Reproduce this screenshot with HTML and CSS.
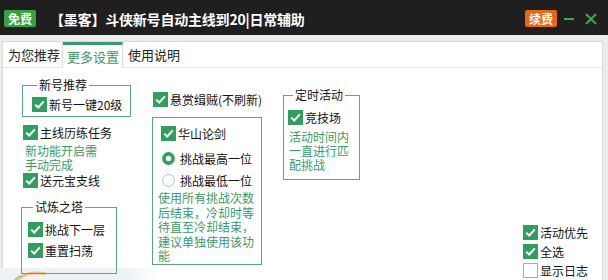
FILE: index.html
```html
<!DOCTYPE html>
<html lang="zh-CN">
<head>
<meta charset="utf-8">
<title>墨客 斗侠</title>
<link rel="stylesheet" href="styles.css">
</head>
<body>
<div class="titlebar">
  <span class="badge free">免费</span>
  <span class="title">【墨客】斗侠新号自动主线到20|日常辅助</span>
  <span class="spacer"></span>
  <span class="badge renew">续费</span>
  <span class="win-btn min"><svg width="10" height="10" viewBox="0 0 10 10"><rect x="0" y="4" width="10" height="2" fill="#3aa84f"/></svg></span>
  <span class="win-btn close"><svg width="12" height="12" viewBox="0 0 12 12"><path d="M1 1 L11 11 M11 1 L1 11" stroke="#3aa84f" stroke-width="2" fill="none"/></svg></span>
</div>
<div class="main">
  <div class="box">
    <div class="tabs">
      <div class="tab">为您推荐</div>
      <div class="tab active">更多设置</div>
      <div class="tab last">使用说明</div>
      <div class="tab-fill"></div>
    </div>
    <div class="panel">
      <div class="deco"><svg width="60" height="12" viewBox="0 0 60 12"><path d="M16 13 Q26 2 46 6" stroke="#f0b070" stroke-width="3" fill="none" opacity="0.8"/><path d="M14 13 Q17 9 21 8" stroke="#9fd07a" stroke-width="2" fill="none" opacity="0.8"/></svg></div>

      <div class="col col-a">
        <fieldset class="grp g1">
          <legend>新号推荐</legend>
          <div class="chk"><span class="box-on"><svg width="15" height="15" viewBox="0 0 15 15"><rect width="15" height="15" fill="#2f9e5f"/><polyline points="3.2,7.6 6.2,10.5 11.8,4.4" stroke="#fff" stroke-width="2" fill="none"/></svg></span>新号一键20级</div>
        </fieldset>
        <div class="chk c-main"><span class="box-on"><svg width="15" height="15" viewBox="0 0 15 15"><rect width="15" height="15" fill="#2f9e5f"/><polyline points="3.2,7.6 6.2,10.5 11.8,4.4" stroke="#fff" stroke-width="2" fill="none"/></svg></span>主线历练任务</div>
        <div class="note n-main">新功能开启需<br>手动完成</div>
        <div class="chk c-yb"><span class="box-on"><svg width="15" height="15" viewBox="0 0 15 15"><rect width="15" height="15" fill="#2f9e5f"/><polyline points="3.2,7.6 6.2,10.5 11.8,4.4" stroke="#fff" stroke-width="2" fill="none"/></svg></span>送元宝支线</div>
        <fieldset class="grp g2">
          <legend>试炼之塔</legend>
          <div class="chk"><span class="box-on"><svg width="15" height="15" viewBox="0 0 15 15"><rect width="15" height="15" fill="#2f9e5f"/><polyline points="3.2,7.6 6.2,10.5 11.8,4.4" stroke="#fff" stroke-width="2" fill="none"/></svg></span>挑战下一层</div>
          <div class="chk c-reset"><span class="box-on"><svg width="15" height="15" viewBox="0 0 15 15"><rect width="15" height="15" fill="#2f9e5f"/><polyline points="3.2,7.6 6.2,10.5 11.8,4.4" stroke="#fff" stroke-width="2" fill="none"/></svg></span>重置扫荡</div>
        </fieldset>
      </div>

      <div class="col col-b">
        <div class="chk c-xs"><span class="box-on"><svg width="15" height="15" viewBox="0 0 15 15"><rect width="15" height="15" fill="#2f9e5f"/><polyline points="3.2,7.6 6.2,10.5 11.8,4.4" stroke="#fff" stroke-width="2" fill="none"/></svg></span>悬赏缉贼(不刷新)</div>
        <fieldset class="grp g3">
          <div class="chk"><span class="box-on"><svg width="15" height="15" viewBox="0 0 15 15"><rect width="15" height="15" fill="#2f9e5f"/><polyline points="3.2,7.6 6.2,10.5 11.8,4.4" stroke="#fff" stroke-width="2" fill="none"/></svg></span>华山论剑</div>
          <div class="chk radio r1"><span class="rad"><svg width="13" height="13" viewBox="0 0 13 13"><circle cx="6.5" cy="6.5" r="4.6" stroke="#2f9e5f" stroke-width="3.6" fill="#fff"/></svg></span>挑战最高一位</div>
          <div class="chk radio r2"><span class="rad"><svg width="13" height="13" viewBox="0 0 13 13"><circle cx="6.5" cy="6.5" r="6" stroke="#a8c8b6" stroke-width="1" fill="#fff"/></svg></span>挑战最低一位</div>
          <div class="note n-hs">使用所有挑战次数<br>后结束，冷却时等<br>待直至冷却结束，<br>建议单独使用该功<br>能</div>
        </fieldset>
      </div>

      <div class="col col-c">
        <fieldset class="grp g4">
          <legend>定时活动</legend>
          <div class="chk"><span class="box-on"><svg width="15" height="15" viewBox="0 0 15 15"><rect width="15" height="15" fill="#2f9e5f"/><polyline points="3.2,7.6 6.2,10.5 11.8,4.4" stroke="#fff" stroke-width="2" fill="none"/></svg></span>竞技场</div>
          <div class="note n-jj">活动时间内<br>一直进行匹<br>配挑战</div>
        </fieldset>
      </div>

      <div class="col col-d">
        <div class="chk"><span class="box-on"><svg width="15" height="15" viewBox="0 0 15 15"><rect width="15" height="15" fill="#2f9e5f"/><polyline points="3.2,7.6 6.2,10.5 11.8,4.4" stroke="#fff" stroke-width="2" fill="none"/></svg></span>活动优先</div>
        <div class="chk"><span class="box-on"><svg width="15" height="15" viewBox="0 0 15 15"><rect width="15" height="15" fill="#2f9e5f"/><polyline points="3.2,7.6 6.2,10.5 11.8,4.4" stroke="#fff" stroke-width="2" fill="none"/></svg></span>全选</div>
        <div class="chk"><span class="box-off"></span>显示日志</div>
      </div>
    </div>
  </div>
</div>
</body>
</html>
```
FILE: styles.css
```css
* { box-sizing: border-box; }
html, body {
  margin: 0;
  padding: 0;
}
body {
  width: 608px;
  height: 280px;
  overflow: hidden;
  background: #ececec;
  font-family: "Noto Sans CJK SC", "Microsoft YaHei", sans-serif;
  font-size: 12px;
  color: #111;
}

/* title bar */
.titlebar {
  height: 35px;
  background: #1f1f1f;
  display: flex;
  align-items: center;
  padding: 0 11px 0 4px;
}
.badge {
  width: 32px;
  height: 17px;
  line-height: 17px;
  text-align: center;
  color: #fff;
  font-size: 12px;
  font-weight: bold;
  border-radius: 2px;
  margin-top: 2px;
}
.badge.free { background: #38a23a; }
.badge.renew { background: #ea6610; margin-right: 7px; }
.title {
  margin-left: 14px;
  margin-top: 3px;
  color: #fff;
  font-size: 14px;
  font-weight: bold;
  line-height: 20px;
  letter-spacing: -0.2px;
}
.spacer { flex: 1; }
.win-btn { display: flex; align-items: center; margin-top: 2px; }
.win-btn.min { margin-right: 11px; margin-top: 3px; }
.win-btn svg { display: block; }

/* main frame */
.main {
  height: 245px;
  padding: 6px 5px 0 2px;
}
.box {
  height: 100%;
  background: #fff;
  border: 1px solid #dadada;
  border-bottom: none;
  display: flex;
  flex-direction: column;
}
.tabs {
  display: flex;
  height: 26px;
  flex: none;
}
.tab {
  width: 60px;
  padding-left: 5px;
  font-size: 13px;
  line-height: 25px;
  color: #222;
  border-right: 1px solid #dcdcdc;
  border-bottom: 1px solid #e4e4e4;
  background: #fff;
}
.tab.active {
  color: #3a9a68;
  border-top: 3px solid #3b9a6c;
  border-bottom: none;
  line-height: 22px;
  padding-top: 1px;
  padding-left: 4px;
}
.tab.last { border-right: none; }
.tab-fill { flex: 1; border-bottom: 1px solid #e4e4e4; }

.panel {
  flex: 1;
  position: relative;
  display: grid;
  grid-template-columns: 131px 131px 240px 1fr;
  padding-left: 18px;
}
.deco {
  position: absolute;
  left: -3px;
  bottom: 0;
  width: 160px;
  height: 12px;
  background: linear-gradient(to right, #eef2f5 0%, #eef2f5 80%, rgba(238,242,245,0) 100%);
  z-index: 0;
}
.deco svg { display: block; }
.col { position: relative; z-index: 1; display: flex; flex-direction: column; align-items: flex-start; }

/* controls */
.chk {
  display: flex;
  align-items: center;
  height: 15px;
  line-height: 15px;
  gap: 2px;
  white-space: nowrap;
}
.box-on, .rad { display: block; width: 15px; height: 15px; flex: none; }
.box-on svg, .rad svg { display: block; }
.rad { width: 13px; height: 13px; margin: 0 3px 0 1px; }
.box-off {
  display: block;
  width: 15px;
  height: 15px;
  flex: none;
  border: 1px solid #8fbba3;
  background: #fff;
}
.note {
  color: #3a9a68;
  line-height: 14px;
  white-space: nowrap;
}

.grp {
  margin: 0;
  padding: 0;
  border: 1px solid #5aa783;
  min-width: 0;
}
.grp legend {
  margin-left: 5px;
  padding: 0 2px;
  line-height: 14px;
  font-size: 12px;
  color: #111;
}

/* column A */
.col-a { padding-top: 10px; }
.g1 { width: 109px; margin-left: 1px; padding: 5px 0 4px 9px; }
.c-main { margin-top: 8px; margin-left: 2px; }
.n-main { margin-top: 4px; margin-left: 4px; }
.c-yb { margin-top: 1px; margin-left: 2px; }
.g2 { width: 96px; margin-top: 12px; padding: 8px 0 15px 6px; }
.c-reset { margin-top: 6px; }

/* column B */
.col-b { padding-top: 24px; }
.c-xs { margin-left: 1px; }
.g3 { width: 110px; margin-top: 10px; padding: 8px 0 0 8px; }
.r1 { margin-top: 10px; }
.r2 { margin-top: 7px; }
.n-hs { margin-top: 3px; margin-left: -3px; line-height: 14.5px; }

/* column C */
.col-c { padding-top: 20px; }
.g4 { width: 77px; padding: 8px 0 7px 4px; }
.n-jj { margin-top: 5px; margin-left: 1px; }

/* column D */
.col-d { padding-top: 157px; gap: 4px; }
```
